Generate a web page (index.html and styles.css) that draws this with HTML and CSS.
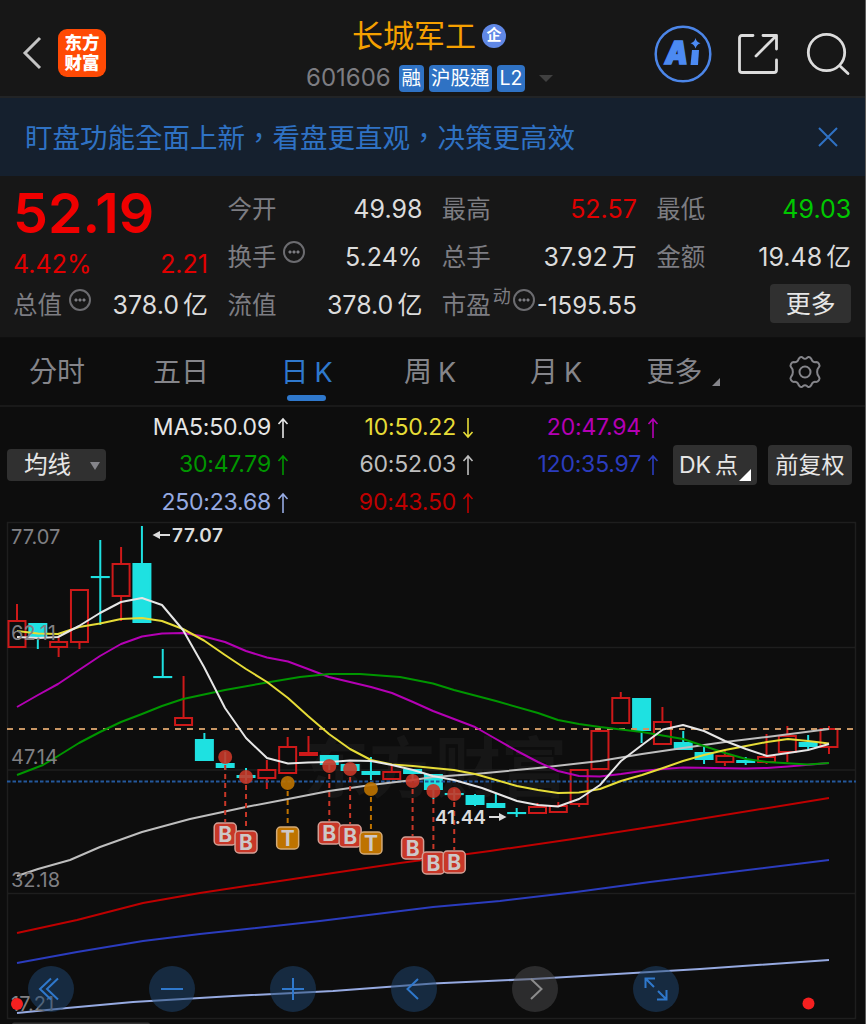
FILE: index.html
```html
<!DOCTYPE html>
<html lang="zh-Hant">
<head>
    <meta charset="UTF-8">
    <title>长城军工 601606</title>
    <link rel="stylesheet" href="styles.css">
</head>
<body>
    <!-- Header -->
    <header class="header">
        <div class="header-left">
            <svg class="back" width="22" height="36" viewBox="0 0 22 36"><path d="M19 3 L4 18 L19 33"/></svg>
            <div class="logo"><span>东方</span><span>财富</span></div>
        </div>
        <div class="stock">
            <div class="stock-name">长城军工<span class="corp">企</span></div>
            <div class="stock-info">
                <span class="code">601606</span>
                <span class="tag">融</span>
                <span class="tag">沪股通</span>
                <span class="tag">L2</span>
                <span class="caret"></span>
            </div>
        </div>
        <div class="header-right">
            <div class="ai">
                <svg width="58" height="58" viewBox="0 0 58 58">
                    <circle cx="29" cy="29" r="27.3"/>
                    <text x="11" y="39" textLength="23" lengthAdjust="spacingAndGlyphs">A</text>
                    <path d="M38 25h7l-1 15h-7.500z"/>
                    <path d="M41.500 13 Q42.500 17.200 46.500 18.300 Q42.500 19.500 41.500 23.500 Q40.500 19.500 36.500 18.300 Q40.500 17.200 41.500 13z"/>
                </svg>
            </div>
            <svg class="icon share" width="42" height="42" viewBox="0 0 42 42">
                <path d="M16 2.500 H5 Q2.500 2.500 2.500 5 V37 Q2.500 39.500 5 39.500 H37 Q39.500 39.500 39.500 37 V27"/>
                <path d="M26 2.500 H39.500 V16 M39 3 L19 23"/>
            </svg>
            <svg class="icon" width="44" height="44" viewBox="0 0 44 44"><circle cx="20.500" cy="20.500" r="18.200"/><path d="M34 34 L42 41.500"/></svg>
        </div>
    </header>

    <div class="notice">
        <span>盯盘功能全面上新，看盘更直观，决策更高效</span>
        <svg width="22" height="22" viewBox="0 0 22 22"><path d="M2 2 L20 20 M20 2 L2 20"/></svg>
    </div>

    <!-- Quote -->
    <section class="quote">
        <div class="col">
            <div class="price">52.19</div>
            <div class="change"><span>4.42%</span><span>2.21</span></div>
            <div class="row"><label>总值<i class="more-dot"></i></label><b>378.0<em>亿</em></b></div>
        </div>
        <div class="col">
            <div class="row"><label>今开</label><b>49.98</b></div>
            <div class="row"><label>换手<i class="more-dot"></i></label><b>5.24%</b></div>
            <div class="row"><label>流值</label><b>378.0<em>亿</em></b></div>
        </div>
        <div class="col">
            <div class="row"><label>最高</label><b class="up">52.57</b></div>
            <div class="row"><label>总手</label><b>37.92<em>万</em></b></div>
            <div class="row pe"><label>市盈<sup>动</sup><i class="more-dot"></i></label><b>-1595.55</b></div>
        </div>
        <div class="col">
            <div class="row"><label>最低</label><b class="down">49.03</b></div>
            <div class="row"><label>金额</label><b>19.48<em>亿</em></b></div>
            <div class="row end"><button class="btn-more">更多</button></div>
        </div>
    </section>

    <!-- Period tabs -->
    <nav class="tabs">
        <span class="tab">分时</span>
        <span class="tab">五日</span>
        <span class="tab active">日<em>K</em></span>
        <span class="tab">周<em>K</em></span>
        <span class="tab">月<em>K</em></span>
        <span class="tab tab-more">更多<i class="corner"></i></span>
        <span class="tab tab-set">
            <svg width="36" height="34" viewBox="0 0 36 34">
                <path d="M11.500 4.200 C13 1.200 15.500 1.500 16 3 Q18 4.500 20 3 C20.500 1.500 23 1.200 24.500 4.200 C25 6.500 27 7.600 29.200 7 C31.500 7 33.500 10.500 32 12 C29.500 14.500 29.500 19.500 32 22 C33.500 23.500 31.500 27 29.200 27 C27 26.400 25 27.500 24.500 29.800 C23 32.800 20.500 32.500 20 31 Q18 29.500 16 31 C15.500 32.500 13 32.800 11.500 29.800 C11 27.500 9 26.400 6.800 27 C4.500 27 2.500 23.500 4 22 C6.500 19.500 6.500 14.500 4 12 C2.500 10.500 4.500 7 6.800 7 C9 7.600 11 6.500 11.500 4.200z"/>
                <circle cx="18" cy="17" r="5.500"/>
            </svg>
        </span>
    </nav>

    <!-- Moving averages -->
    <section class="ma">
        <button class="ma-select">均线<i></i></button>
        <div class="ma-list">
            <div class="ma5">MA5:50.09<svg viewBox="0 0 12 22"><path d="M6 21V2M1.500 7L6 2L10.500 7"/></svg></div>
            <div class="ma10">10:50.22<svg viewBox="0 0 12 22"><path d="M6 1V20M1.500 15L6 20L10.500 15"/></svg></div>
            <div class="ma20">20:47.94<svg viewBox="0 0 12 22"><path d="M6 21V2M1.500 7L6 2L10.500 7"/></svg></div>
            <div class="ma30">30:47.79<svg viewBox="0 0 12 22"><path d="M6 21V2M1.500 7L6 2L10.500 7"/></svg></div>
            <div class="ma60">60:52.03<svg viewBox="0 0 12 22"><path d="M6 21V2M1.500 7L6 2L10.500 7"/></svg></div>
            <div class="ma120">120:35.97<svg viewBox="0 0 12 22"><path d="M6 21V2M1.500 7L6 2L10.500 7"/></svg></div>
            <div class="ma250">250:23.68<svg viewBox="0 0 12 22"><path d="M6 21V2M1.500 7L6 2L10.500 7"/></svg></div>
            <div class="ma90">90:43.50<svg viewBox="0 0 12 22"><path d="M6 21V2M1.500 7L6 2L10.500 7"/></svg></div>
        </div>
        <div class="ma-buttons">
            <button class="dk">DK<em>点</em><i class="corner"></i></button>
            <button>前复权</button>
        </div>
    </section>

    <!-- K line chart -->
    <section class="chart">
        <svg id="kline" width="866" height="504" viewBox="0 520 866 504">
            <text class="watermark" x="303" y="792">东方财富</text>
            <path class="grid" d="M7.500 522.500H855.500V1018.500H7.500zM7 647.500H856M7 770H856M7 893.500H856"/>
            <g id="candles"></g>
            <path class="dash-price" d="M7 729H856"/>
            <path class="dash-cost" d="M7 781.500H856"/>
            <g id="lines"></g>
            <g id="marks"></g>
            <g class="axis">
                <text x="11" y="544">77.07</text>
                <text x="11" y="640">62.11</text>
                <text x="11" y="764">47.14</text>
                <text x="11" y="887">32.18</text>
                <text x="11" y="1011">17.21</text>
            </g>
            <g class="extreme">
                <text x="172" y="542" textLength="51">77.07</text>
                <path d="M170 535H156"/><path class="head" d="M152.500 535L160 531V539z"/>
                <text x="435" y="824" textLength="51">41.44</text>
                <path d="M489 817H503"/><path class="head" d="M506.500 817L499 813V821z"/>
            </g>
            <circle class="dot" cx="17" cy="1004" r="6"/>
            <circle class="dot" cx="808.500" cy="1003.500" r="6"/>
            <rect x="12" y="1022.500" width="138" height="4" rx="2" fill="#333"/>
        </svg>
        <div class="tools">
            <span><svg viewBox="0 0 46 46"><path d="M23 12.500L12 23L23 33.500M30 12.500L19 23L30 33.500"/></svg></span>
            <span><svg viewBox="0 0 46 46"><path d="M12 23H34"/></svg></span>
            <span><svg viewBox="0 0 46 46"><path d="M12 23H34M23 12V34"/></svg></span>
            <span><svg viewBox="0 0 46 46"><path d="M27 13L16.500 23L27 33"/></svg></span>
            <span class="off"><svg viewBox="0 0 46 46"><path d="M19 13L29.500 23L19 33"/></svg></span>
            <span><svg viewBox="0 0 46 46"><path d="M12.500 22V12.500H22M13 13L21 21M33.500 24V33.500H24M33 33L25 25"/></svg></span>
        </div>
    </section>

    <script src="chart.js"></script>
</body>
</html>
```

FILE: styles.css
```css
* {
    box-sizing: border-box;
}

body {
    margin: 0;
    width: 866px;
    height: 1024px;
    overflow: hidden;
    background: #0d0d0d;
    border-right: 1px solid #5c5c5c;
    color: #dcdcdc;
    font-family: Inter, "Noto Sans CJK TC", sans-serif;
    line-height: 1.2;
}

button {
    border: none;
    border-radius: 4px;
    background: #303030;
    color: #e6e6e6;
    font-family: inherit;
    line-height: 1.2;
    padding: 0;
}

em, i {
    font-style: normal;
}

svg {
    display: block;
    fill: none;
}

/* Header */
.header {
    display: grid;
    grid-template-columns: 300px 1fr 212px;
    height: 98px;
    background: #171717;
    border-bottom: 2px solid #222426;
}

.header-left {
    display: flex;
    align-items: center;
    padding: 7px 0 0 21px;
}

.back path {
    stroke: #c4c4c4;
    stroke-width: 3;
}

.logo {
    display: flex;
    flex-direction: column;
    justify-content: center;
    align-items: center;
    width: 48px;
    height: 48px;
    margin-left: 15px;
    border-radius: 9px;
    background: #ff4a05;
    color: white;
    font-size: 17.5px;
    font-weight: 900;
    line-height: 20px;
}

.stock-name {
    display: flex;
    align-items: center;
    height: 58px;
    padding: 14px 0 0 52px;
    color: #f5a000;
    font-size: 31px;
}

.corp {
    width: 24px;
    height: 24px;
    margin-left: 6px;
    border-radius: 50%;
    background: #6088e6;
    color: white;
    font-size: 15px;
    font-weight: 700;
    line-height: 22px;
    text-align: center;
}

.stock-info {
    display: flex;
    align-items: center;
    gap: 5px;
    height: 40px;
    padding-left: 6px;
}

.code {
    width: 88px;
    color: #7d7d82;
    font-size: 24px;
}

.tag {
    height: 27px;
    padding: 0 2.5px;
    border-radius: 4px;
    background: #2f72c4;
    color: white;
    font-size: 19.5px;
    line-height: 26px;
}

.caret {
    margin-left: 9px;
    border: 7px solid transparent;
    border-top-color: #404040;
    border-bottom: none;
}

.header-right {
    display: flex;
    align-items: center;
    padding: 9px 0 0 1px;
}

.ai circle {
    stroke: #4c86e8;
    stroke-width: 2.5;
}

.ai text {
    fill: #4c8af2;
    stroke: #4c8af2;
    stroke-width: 1.5;
    font: italic 900 31px Inter, sans-serif;
}

.ai path {
    fill: #4c8af2;
}

.icon {
    stroke: #dcdcdc;
    stroke-width: 2.8;
    stroke-linecap: round;
    stroke-linejoin: round;
}

.share {
    margin: 0 27px 0 25px;
}

.notice {
    display: flex;
    justify-content: space-between;
    align-items: center;
    height: 78px;
    padding: 0 26px 0 25px;
    background: #15202e;
    color: #2f72c4;
    font-size: 27.5px;
}

.notice span {
    padding-top: 2px;
}

.notice svg {
    stroke: #2f72c4;
    stroke-width: 2;
}

/* Quote */
.quote {
    display: grid;
    grid-template-columns: repeat(4, 195px);
    column-gap: 19.4px;
    height: 162px;
    padding: 9px 0 0 13px;
    background: #171717;
    border-bottom: 1px solid #0f0f0f;
}

.row {
    display: flex;
    justify-content: space-between;
    align-items: center;
    height: 48px;
    white-space: nowrap;
}

.row label {
    display: flex;
    align-items: center;
    padding-top: 2px;
    color: #7d7d82;
    font-size: 24.5px;
}

.row b {
    font-size: 25px;
    font-weight: 400;
}

.row b em {
    margin-left: 4px;
}

.row .up {
    color: #e00000;
}

.row .down {
    color: #00c800;
}

.row.end {
    justify-content: flex-end;
}

.more-dot {
    width: 22px;
    height: 22px;
    margin: -12px 0 0 7px;
    border: 2px solid #6c6c70;
    border-radius: 50%;
    background:
        radial-gradient(circle at 5px 9px, #7d7d82 1.3px, transparent 1.8px),
        radial-gradient(circle at 9px 9px, #7d7d82 1.3px, transparent 1.8px),
        radial-gradient(circle at 13px 9px, #7d7d82 1.3px, transparent 1.8px);
}

.pe sup {
    margin: -17px 0 0 2px;
    font-size: 18px;
    line-height: 20px;
}

.pe .more-dot {
    margin-left: 2px;
}

.pe b {
    padding-top: 2px;
    font-size: 24px;
}

.price {
    height: 56px;
    color: #f00000;
    font-size: 55.5px;
    font-weight: 600;
    line-height: 56px;
}

.change {
    display: flex;
    justify-content: space-between;
    height: 40px;
    color: #e00000;
    font-size: 25px;
    line-height: 46px;
}

.btn-more {
    width: 81px;
    height: 39px;
    margin-top: -3px;
    font-size: 25px;
}

/* Tabs */
.tabs {
    display: grid;
    grid-template-columns: 114px 134px 117px 130px 122px 132px 1fr;
    height: 69px;
    border-bottom: 2px solid #191919;
    color: #85858a;
    font-size: 28px;
}

.tab {
    position: relative;
    display: flex;
    justify-content: center;
    align-items: center;
    height: 68px;
    padding-top: 2px;
}

.tab em {
    margin-left: 6px;
    font-size: 27px;
}

.tab svg {
    stroke: #85858a;
    stroke-width: 2;
}

.tab-set {
    padding: 0 4px 0 0;
}

.tab.active {
    color: #2f78cc;
}

.tab.active::after {
    content: "";
    position: absolute;
    bottom: 5px;
    width: 39px;
    height: 6px;
    border-radius: 3px;
    background: #2f78cc;
}

.corner {
    width: 0;
    border-left: 8px solid transparent;
    border-bottom: 8px solid #85858a;
}

.tab-more .corner {
    margin: 18px 0 0 9px;
}

/* Moving averages */
.ma {
    display: flex;
    height: 113px;
}

.ma-select {
    display: flex;
    align-items: center;
    width: 99px;
    height: 32px;
    margin: 42px 0 0 7px;
    padding: 1px 0 0 17px;
    font-size: 23.5px;
}

.ma-select i {
    margin-left: 19px;
    border: 5px solid transparent;
    border-top: 8px solid #85858a;
    border-bottom: none;
}

.ma-list {
    display: grid;
    grid-template-columns: 183px 185px 185px;
    grid-auto-rows: 37.5px;
    width: 554px;
    padding-top: 2px;
}

.ma-list div {
    display: flex;
    justify-content: flex-end;
    align-items: center;
    font-size: 23px;
    letter-spacing: -0.2px;
}

.ma-list svg {
    width: 12px;
    height: 22px;
    margin-left: 6px;
    stroke: currentColor;
    stroke-width: 1.6;
}

.ma5 { color: #e6e6e6; }
.ma10 { color: #e6dc37; }
.ma20 { color: #b400b4; }
.ma30 { color: #009600; }
.ma60 { color: #bebebe; }
.ma120 { color: #2b3cbe; }
.ma250 { color: #96aae1; }
.ma90 { color: #be0000; }

.ma-buttons {
    display: flex;
    gap: 11px;
    margin: 38px 0 0 13px;
}

.ma-buttons button {
    display: flex;
    justify-content: center;
    align-items: center;
    width: 84px;
    height: 40px;
    padding-top: 2px;
    font-size: 23px;
}

.ma-buttons .dk {
    justify-content: flex-start;
    padding-left: 6px;
}

.dk em {
    margin-left: 4px;
}

.dk .corner {
    margin: 18px 0 0 1px;
    border-left-width: 12px;
    border-bottom: 12px solid white;
}

/* Chart */
.chart {
    position: relative;
    height: 504px;
}

.watermark {
    fill: #161616;
    font: 700 66px "Noto Sans CJK SC", sans-serif;
}

.grid {
    stroke: #1e1e1e;
    stroke-width: 1.5;
}

.dash-price {
    stroke: #c89664;
    stroke-width: 2;
    stroke-dasharray: 6 6;
}

.dash-cost {
    stroke: #24589c;
    stroke-width: 2;
    stroke-dasharray: 3.5 2;
}

.rise {
    stroke: #cd1919;
    stroke-width: 2;
}

.fall {
    fill: #1ee1e1;
    stroke: #1ee1e1;
    stroke-width: 2;
}

.line {
    stroke: currentColor;
    stroke-width: 2;
    stroke-linejoin: round;
}

.axis text {
    fill: #808084;
    font-size: 20px;
}

.extreme text {
    fill: #dcdcdc;
    font: 600 19px Inter, sans-serif;
}

.extreme path {
    stroke: #dcdcdc;
    stroke-width: 2;
}

.extreme .head {
    fill: #dcdcdc;
    stroke: none;
}

.dot {
    fill: #f52020;
}

.mark-b {
    color: #c83728;
}

.mark-t {
    color: #be7300;
}

.stem {
    stroke: currentColor;
    stroke-width: 2;
    stroke-dasharray: 5 4;
}

.pin {
    fill: currentColor;
    fill-opacity: 0.9;
}

.badge {
    fill: currentColor;
    stroke: #d2a096;
    stroke-width: 1.5;
}

.mark-t .badge {
    stroke: #d2aa78;
}

.letter {
    fill: #cdc8c8;
    font: 700 21px Inter, sans-serif;
    text-anchor: middle;
}

.tools {
    position: absolute;
    left: 28px;
    bottom: 12px;
    display: flex;
    gap: 75.1px;
}

.tools span {
    width: 46px;
    height: 46px;
    border-radius: 50%;
    background: rgba(32, 72, 116, 0.5);
}

.tools svg {
    stroke: #2f78cc;
    stroke-width: 2;
}

.tools .off {
    background: rgba(75, 75, 78, 0.5);
}

.tools .off svg {
    stroke: #8c8c8c;
}
```

FILE: chart.js
```js
const STEP = 20.82;
const LEFT = 17;

// [type, high, top, bottom, low]
const candles = [
    ['r', 604, 621, 647, 647], ['c', 623, 623, 638, 649], ['r', 636, 642, 647, 657],
    ['r', 590, 590, 642, 649], ['c', 540, 576, 577, 625], ['r', 547, 564, 596, 621],
    ['c', 526, 563, 623, 623], ['c', 649, 676, 677, 677], ['r', 676, 718, 725, 725],
    ['c', 733, 739, 761, 761], ['c', 752, 763, 768, 770], ['c', 768, 775, 778, 783],
    ['r', 760, 770, 778, 789], ['r', 737, 747, 773, 773], ['r', 736, 753, 755, 755],
    ['c', 755, 755, 765, 770], ['c', 764, 764, 771, 771], ['c', 757, 771, 775, 780],
    ['r', 765, 772, 779, 779], ['c', 769, 769, 774, 780], ['c', 774, 774, 790, 799],
    ['c', 789, 793, 795, 800], ['c', 794, 795, 805, 806], ['c', 793, 803, 808, 808],
    ['c', 808, 812, 813, 817], ['r', 803, 807, 813, 813], ['r', 802, 806, 812, 812],
    ['r', 770, 770, 804, 807], ['r', 731, 731, 769, 769], ['r', 692, 698, 723, 723],
    ['c', 698, 698, 731, 743], ['r', 707, 722, 744, 744], ['c', 731, 742, 750, 750],
    ['c', 744, 752, 760, 764], ['r', 751, 756, 762, 766], ['c', 757, 760, 763, 765],
    ['r', 734, 757, 762, 764], ['r', 726, 736, 752, 762], ['c', 735, 742, 747, 750],
    ['r', 726, 729, 747, 754]
];

const lines = {
    ma5: '17,637 38,638 58,637 79,626 100,613 121,602 142,598 162,605 183,630 204,667 225,708 246,738 267,758 288,763.5 308,762.5 329,762 350,760.5 371,761 392,765 413,770 433,776 454,780 482,788 517,801 538,805 558,806.5 579,799 600,785 621,761 642,745 663,729.5 683,725 704,731 725,741 746,749 767,756 788,753 808,750 829,744',
    ma10: '17,631 38,633.5 58,634 79,627 100,623.5 121,619 142,618 162,621 183,629 204,640.5 225,655 246,669 267,682 288,698 308,716 329,734 350,749 371,760 392,764.5 413,766 433,768 454,770 475,774 496,780 517,786 538,790 558,793 579,792.5 600,789 621,781 642,775 663,768 683,761 704,755 725,750 746,746 767,742 788,739 808,741 829,743.5',
    ma20: '17,707 38,695 58,684 100,656 121,644 142,636.5 162,633.5 183,633 204,636.5 225,642 246,651 267,657.5 288,661.5 308,669 329,677 350,682 371,687 392,693 413,702 433,711 454,719 475,727 496,739 517,751 538,762 558,771 579,776 600,776.5 621,774 642,771 663,769 683,767.5 746,768.5 767,768 788,766.5 829,763',
    ma30: '17,775 43,765 58,756 79,743 100,732 121,722 142,714 162,706 183,699 225,690 267,682.5 300,677 329,674 360,674 400,677 433,683.5 454,690 496,701 538,713 558,720 579,724 600,727 642,732 683,739 704,746 725,753 746,759 767,762 808,764.5 829,763',
    ma60: '17,876 38,869 70,860 100,847 142,832 190,819 246,807 288,799 329,791 371,785 413,780 433,777 475,774 538,768 600,761 642,754 683,748 725,742 767,737 829,729',
    ma90: '17,933 77,920 143,903 200,893 260,884 333,873 400,863 490,851 573,839 663,825 829,798',
    ma120: '17,963 77,952 143,941 200,934 320,921 433,907 500,901 576,892 650,882 829,860',
    ma250: '17,1013 67,1008 133,1002 233,996 333,991 433,983.5 533,979 700,969 829,960'
};

// [candle index, letter, pin y, badge y]
const marks = [
    [10, 'B', 757, 834], [11, 'B', 777, 842], [13, 'T', 783, 838], [15, 'B', 766, 833],
    [16, 'B', 769, 836], [17, 'T', 789, 843], [19, 'B', 781, 848], [20, 'B', 791, 863],
    [21, 'B', 794, 862]
];

let html = '';
candles.forEach(([type, high, top, bottom, low], i) => {
    const x = LEFT + STEP * i;
    const cls = type === 'r' ? 'rise' : 'fall';
    // filled bodies are inset by half the stroke
    const d = type === 'r' ? 0 : 1;
    html += `<path class="${cls}" d="M${x} ${high}V${top}M${x} ${bottom}V${low}"/>`;
    html += `<rect class="${cls}" x="${x - 8.5}" y="${top + d}" width="17" height="${Math.max(bottom - top - 2 * d, 0.1)}"/>`;
});
document.getElementById('candles').innerHTML = html;

html = '';
for (const name of ['ma250', 'ma120', 'ma90', 'ma60', 'ma20', 'ma30', 'ma10', 'ma5']) {
    html += `<polyline class="line ${name}" points="${lines[name]}"/>`;
}
document.getElementById('lines').innerHTML = html;

html = '';
marks.forEach(([i, letter, pin, badge]) => {
    const x = LEFT + STEP * i;
    html += `<g class="mark-${letter.toLowerCase()}">
        <path class="stem" d="M${x} ${pin + 8}V${badge - 12}"/>
        <circle class="pin" cx="${x}" cy="${pin}" r="7"/>
        <rect class="badge" x="${x - 11}" y="${badge - 11}" width="22" height="22" rx="4"/>
        <text class="letter" x="${x}" y="${badge + 7.5}">${letter}</text>
    </g>`;
});
document.getElementById('marks').innerHTML = html;
```
